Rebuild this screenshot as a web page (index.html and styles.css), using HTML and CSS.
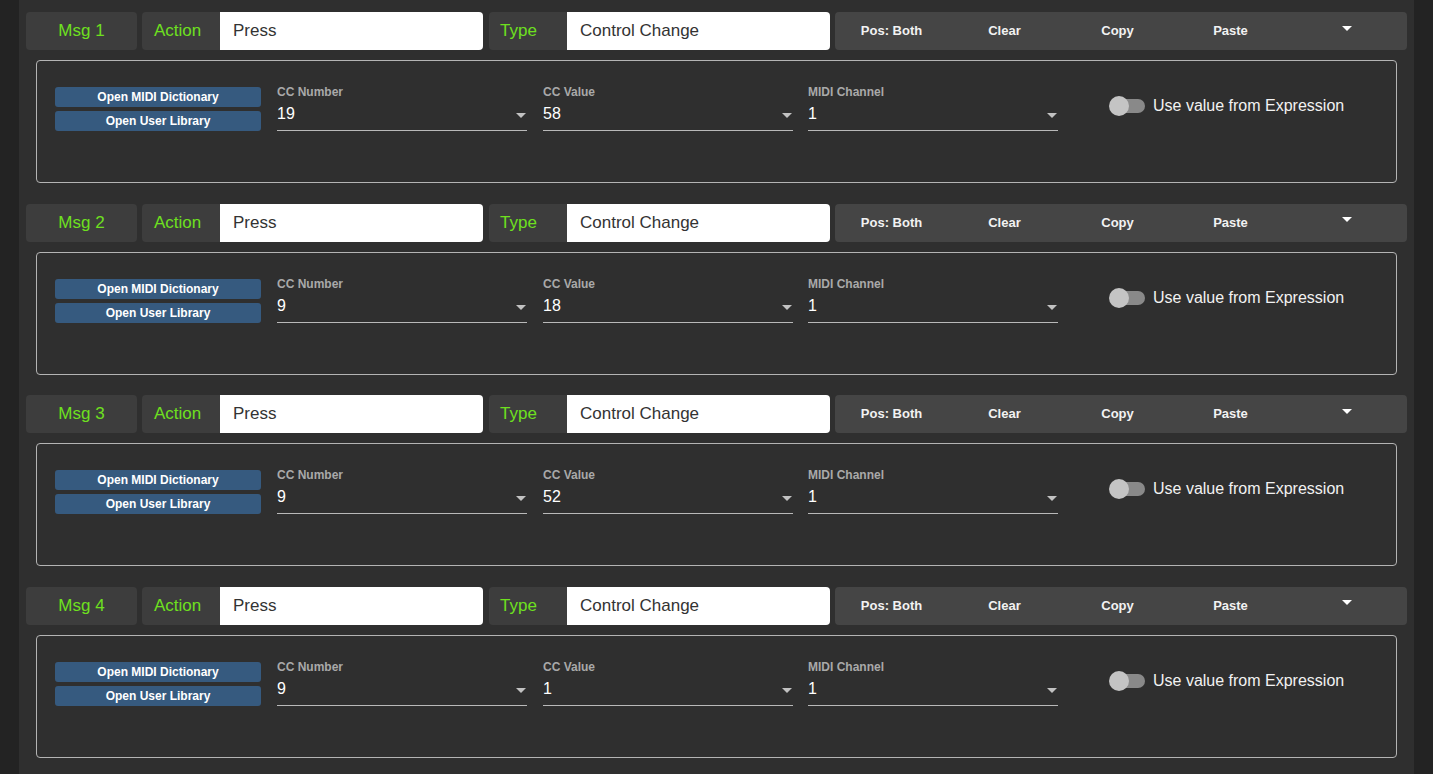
FILE: index.html
```html
<!DOCTYPE html>
<html lang="en">
<head>
  <meta charset="UTF-8" />
  <title>MIDI Messages</title>
  <link rel="stylesheet" href="styles.css">
</head>
<body>
  <div class="page">
    <div id="messages"></div>
  </div>

  <script>
    const msgs = [
      { n: 1, cc: '19', val: '58', ch: '1' },
      { n: 2, cc: '9', val: '18', ch: '1' },
      { n: 3, cc: '9', val: '52', ch: '1' },
      { n: 4, cc: '9', val: '1', ch: '1' }
    ];
    const list = document.getElementById('messages');

    const field = (label, value) => `
      <div class="field">
        <div class="field-label">${label}</div>
        <div class="field-value">${value}<span class="caret"></span></div>
      </div>`;

    msgs.forEach(m => {
      const div = document.createElement('div');
      div.className = 'msg';
      div.innerHTML = `
        <div class="msg-head">
          <div class="tag msg-name">Msg ${m.n}</div>
          <div class="tag label">Action</div>
          <div class="box">Press</div>
          <div class="tag label type">Type</div>
          <div class="box">Control Change</div>
          <div class="tools">
            <span>Pos: Both</span>
            <span>Clear</span>
            <span>Copy</span>
            <span>Paste</span>
            <span><i class="down"></i></span>
          </div>
        </div>
        <div class="msg-body">
          <div class="lib-buttons">
            <button>Open MIDI Dictionary</button>
            <button>Open User Library</button>
          </div>
          ${field('CC Number', m.cc)}
          ${field('CC Value', m.val)}
          ${field('MIDI Channel', m.ch)}
          <label class="switch"><span class="track"><span class="thumb"></span></span>Use value from Expression</label>
        </div>`;
      list.appendChild(div);
    });
  </script>
</body>
</html>
```

FILE: styles.css
```css
body {
  margin: 0;
  background: #232323;
  font-family: "Liberation Sans", Arial, sans-serif;
}
.page {
  margin: 0 19px;
  background: #2f2f2f;
  padding: 12px 7px 0;
  min-height: 774px;
  box-sizing: border-box;
}
.msg { margin-bottom: 20.67px; }

.msg-head {
  display: flex;
  height: 38px;
}
.tag {
  display: flex;
  align-items: center;
  justify-content: center;
  background: #3d3d3d;
  color: #6ee01f;
  font-size: 17px;
  border-radius: 4px 0 0 4px;
}
.msg-name { width: 111px; border-radius: 4px; margin-right: 5px; }
.label {
  width: 78px;
  justify-content: flex-start;
  padding-left: 12px;
  box-sizing: border-box;
}
.type { margin-left: 6px; padding-left: 11px; }
.box {
  background: #fff;
  color: #333;
  font-size: 17px;
  display: flex;
  align-items: center;
  padding-left: 13px;
  border-radius: 0 4px 4px 0;
  width: 263px;
  box-sizing: border-box;
}
.box:nth-of-type(2) { width: 262px; }
.tools {
  margin-left: 5px;
  flex: 1;
  display: flex;
  padding-right: 7px;
  padding-bottom: 1px;
  background: #454545;
  border-radius: 4px;
}
.tools span {
  flex: 1;
  display: flex;
  align-items: center;
  justify-content: center;
  color: #f2f2f2;
  font-size: 13px;
  font-weight: bold;
}
.down {
  display: block;
  margin-left: 7px;
  margin-top: -5px;
  border-left: 5px solid transparent;
  border-right: 5px solid transparent;
  border-top: 5px solid #fff;
}

.msg-body {
  margin: 10px 10px 0;
  border: 1px solid #b4b4b4;
  border-radius: 4px;
  height: 123px;
  box-sizing: border-box;
  padding: 24px 18px 0;
  display: flex;
  align-items: flex-start;
}
.lib-buttons {
  width: 206px;
  display: flex;
  flex-direction: column;
  gap: 4px;
  margin-top: 2px;
  margin-right: 16px;
}
.lib-buttons button {
  height: 20px;
  border: none;
  border-radius: 3px;
  background: #365a7f;
  color: #fff;
  font-family: inherit;
  font-size: 12px;
  font-weight: bold;
  padding: 0;
}
.field {
  width: 250px;
  margin-right: 16px;
}
.field:nth-of-type(3) { margin-right: 15px; }
.field-label {
  color: #a9a9a9;
  font-size: 12px;
  font-weight: bold;
  height: 14px;
}
.field-value {
  position: relative;
  color: #fff;
  font-size: 16px;
  padding: 6px 0 7px;
  border-bottom: 1px solid #b9b9b9;
}
.caret {
  position: absolute;
  right: 1px;
  top: 14px;
  border-left: 5px solid transparent;
  border-right: 5px solid transparent;
  border-top: 5px solid #c2c2c2;
}
.switch {
  display: flex;
  align-items: center;
  margin-left: 35px;
  margin-top: 12px;
  color: #f2f2f2;
  font-size: 16px;
}
.track {
  position: relative;
  width: 30px;
  height: 14px;
  margin-left: 6px;
  margin-right: 8px;
  background: #898989;
  border-radius: 7px;
}
.thumb {
  position: absolute;
  left: -6px;
  top: -3px;
  width: 20px;
  height: 20px;
  border-radius: 50%;
  background: #c4c4c4;
}
```
